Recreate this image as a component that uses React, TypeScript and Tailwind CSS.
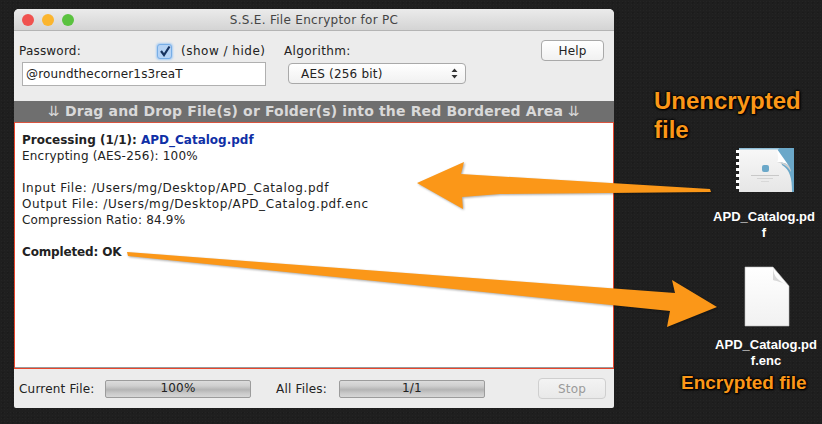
const ui = "font-['DejaVu_Sans','Liberation_Sans',sans-serif]";

function Meter({ label, w }: { label: string; w: string }) {
  return (
    <div className={`${w} h-[18px] rounded-[2px] border border-[#9c9c9c] bg-[linear-gradient(#dcdcdc,#cfcfcf_30%,#b4b4b4_55%,#c8c8c8_75%,#d6d6d6)] flex items-center justify-center text-[12px] leading-none text-[#222] pb-[2px]`}>
      {label}
    </div>
  );
}

function MacButton({ children, disabled, className = '' }: { children: string; disabled?: boolean; className?: string }) {
  return (
    <button
      className={`h-[21px] rounded-[4px] border text-[12px] leading-none ${disabled ? 'border-[#cfcfcf] text-[#9a9a9a] bg-[linear-gradient(#f3f3f3,#e9e9e9)]' : 'border-[#a9a9a9] text-[#222] bg-[linear-gradient(#ffffff,#f1f1f1)]'} ${className}`}
    >
      {children}
    </button>
  );
}

function Window() {
  return (
    <div className={`${ui} w-[600px] h-[399px] flex flex-col bg-[#ececec] rounded-t-[5px] rounded-b-[2px] overflow-hidden text-[12px] tracking-[0.2px] text-[#222]`}>
      {/* title bar */}
      <div className="relative h-[22px] shrink-0 flex items-center justify-center bg-[linear-gradient(#ebebeb,#d4d4d4)] border-b border-[#b4b4b4]">
        <div className="absolute left-[8px] top-[5px] flex gap-[8px]">
          <span className="w-[12px] h-[12px] rounded-full bg-[#f0524f]" />
          <span className="w-[12px] h-[12px] rounded-full bg-[#fbb52e]" />
          <span className="w-[12px] h-[12px] rounded-full bg-[#5ac23f]" />
        </div>
        <span className="text-[12px] text-[#444] tracking-[0.3px]">S.S.E. File Encryptor for PC</span>
      </div>

      {/* form */}
      <div className="h-[70px] shrink-0 flex pl-[5px] pr-[10px]">
        <div className="w-[248px] pt-[11px]">
          <div className="h-[18px] flex items-center">
            <span className="w-[138px]">Password:</span>
            <span className="w-[15px] h-[15px] rounded-[3px] bg-[#b5d3f5] border border-[#78aee6] shadow-[0_0_2px_1px_#a9cdf3] flex items-center justify-center">
              <svg width="12" height="12" viewBox="0 0 12 12">
                <path d="M2 6 L5 10 L10.5 1.5" fill="none" stroke="#17335f" strokeWidth="2.2" />
              </svg>
            </span>
            <span className="ml-[9px] whitespace-nowrap tracking-[0.5px]">(show / hide)</span>
          </div>
          <div className="mt-[2px] ml-[3px] w-[244px] h-[24px] bg-white border border-[#b0b0b0] flex items-center pl-[3px] text-[12px] tracking-[0.15px] text-[#222]">
            @roundthecorner1s3reaT
          </div>
        </div>
        <div className="ml-[17px] pt-[11px]">
          <div className="h-[18px] flex items-center tracking-[0.4px]">Algorithm:</div>
          <div className="mt-[3px] ml-[4px] w-[178px] h-[21px] rounded-[4px] border border-[#a9a9a9] bg-[linear-gradient(#ffffff,#f1f1f1)] flex items-center pl-[12px] pr-[7px]">
            <span className="flex-1">AES (256 bit)</span>
            <svg width="7" height="11" viewBox="0 0 7 11">
              <path d="M3.5 0.5 L6.5 4 H0.5 Z M3.5 10.5 L0.5 7 H6.5 Z" fill="#333" />
            </svg>
          </div>
        </div>
        <MacButton className="ml-auto mt-[9px] w-[63px]">Help</MacButton>
      </div>

      {/* drop hint */}
      <div className="h-[21px] shrink-0 bg-[#6f6f6f] flex items-center justify-center text-[14px] font-bold tracking-[0.15px] text-[#d9d9d9] whitespace-nowrap">
        <span className="font-normal">⇊</span>&nbsp;Drag and Drop File(s) or Folder(s) into the Red Bordered Area&nbsp;<span className="font-normal">⇊</span>
      </div>

      {/* log */}
      <div className="h-[247px] shrink-0 bg-white border border-[#e8452c] border-t-[#d9543f] shadow-[inset_0_-1px_0_#9a9a9a] pl-[7px] pt-[9px] text-[12px] leading-[16px] text-[#222]">
        <div className="font-bold tracking-normal">
          Processing (1/1): <span className="text-[#0f2fa6]">APD_Catalog.pdf</span>
        </div>
        <div>Encrypting (AES-256): 100%</div>
        <div className="mt-[16px] tracking-[0.57px]">Input File: /Users/mg/Desktop/APD_Catalog.pdf</div>
        <div className="tracking-[0.6px]">Output File: /Users/mg/Desktop/APD_Catalog.pdf.enc</div>
        <div>Compression Ratio: 84.9%</div>
        <div className="mt-[16px] font-bold tracking-[-0.15px]">Completed: OK</div>
      </div>

      {/* status */}
      <div className="flex-1 flex items-center pl-[5px] pr-[8px]">
        <span className="w-[86px]">Current File:</span>
        <Meter label="100%" w="w-[146px]" />
        <span className="ml-[25px] w-[63px]">All Files:</span>
        <Meter label="1/1" w="w-[146px]" />
        <MacButton disabled className="ml-auto w-[68px]">Stop</MacButton>
      </div>
    </div>
  );
}

function PdfThumb() {
  return (
    <svg className="absolute left-[736px] top-[148px]" width="58" height="44" viewBox="0 0 58 44">
      <defs>
        <linearGradient id="page" x1="0" y1="0" x2="0" y2="1">
          <stop offset="0" stopColor="#f8f8f8" />
          <stop offset="1" stopColor="#e6e6e6" />
        </linearGradient>
      </defs>
      <rect x="3" width="55" height="44" fill="url(#page)" />
      <path d="M41 0 H58 V44 H56 C56 30 54 22 46 17 Z" fill="#6ba8c9" />
      <rect x="3" width="40" height="1.5" fill="#8fbdd6" />
      <path d="M41 1 C42 8 43 12 41 14 C46 14 50 15 53 18 Z" fill="#ffffff" />
      <path d="M41 14 C46 14 50 15 53 18 C54 20 55 22 55 24 C52 18 47 16 41 14 Z" fill="#cfcfcf" />
      <g fill="#ffffff">
        {[2, 8, 14, 20, 26, 32, 38].map((y) => (
          <rect key={y} x="0" y={y} width="4" height="3" />
        ))}
      </g>
      <rect x="26" y="17" width="7" height="7" rx="2" fill="#6ba8c9" />
      <rect x="15" y="27" width="28" height="1" fill="#c8c8c8" />
      <rect x="21" y="30" width="16" height="1" fill="#d4d4d4" />
      <rect x="25" y="33" width="8" height="1" fill="#d8d8d8" />
    </svg>
  );
}

function BlankDoc() {
  return (
    <svg className="absolute left-[744px] top-[266px]" width="46" height="61" viewBox="0 0 46 61">
      <defs>
        <linearGradient id="doc" x1="0" y1="0" x2="0" y2="1">
          <stop offset="0" stopColor="#ffffff" />
          <stop offset="1" stopColor="#f1f1f1" />
        </linearGradient>
      </defs>
      <path d="M1 1 H29 L45 20 V60 H1 Z" fill="url(#doc)" stroke="#bcbcbc" strokeWidth="0.6" />
      <path d="M29 1 C30 10 31 13 45 20 C38 16 32 15 29 14 Z" fill="#d8d8d8" />
    </svg>
  );
}

function Arrows() {
  return (
    <svg className="absolute inset-0 pointer-events-none" width="822" height="424" viewBox="0 0 822 424">
      <polygon
        points="417,183 464,162 461,174 710,189 711,192 500,194 462,197 463,209"
        fill="#fb9718"
        style={{ filter: 'drop-shadow(1px 1px 1px rgba(0,0,0,0.35))' }}
      />
      <polygon
        points="127,252 675,293 672,280 717,307 667,327 670,311 128,256"
        fill="#fb9718"
        style={{ filter: 'drop-shadow(1px 1px 1px rgba(0,0,0,0.35))' }}
      />
    </svg>
  );
}

const callout = "absolute font-['Liberation_Sans',Arial,sans-serif] font-bold text-[#fb9718] whitespace-nowrap [text-shadow:0_0_2px_#000,0_0_2px_#000,0_0_3px_#000,1px_1px_2px_#000]";
const fileLabel = "absolute w-[120px] text-center font-['Liberation_Sans',Arial,sans-serif] font-bold text-[13px] leading-[16px] text-white";

export default function App() {
  return (
    <div className="relative w-[822px] h-[424px] overflow-hidden bg-[#1f1f1f] bg-[radial-gradient(#242424_1px,transparent_1px),radial-gradient(#1b1b1b_1px,transparent_1px)] bg-[length:3px_3px,5px_5px] pl-[14px] pt-[9px]">
      <Window />
      <Arrows />
      <div className={`${callout} left-[654px] top-[86px] text-[24px] leading-[29px]`}>
        Unencrypted
        <br />
        file
      </div>
      <PdfThumb />
      <div className={`${fileLabel} left-[704px] top-[209px]`}>
        APD_Catalog.pd
        <br />
        f
      </div>
      <BlankDoc />
      <div className={`${fileLabel} left-[706px] top-[337px]`}>
        APD_Catalog.pd
        <br />
        f.enc
      </div>
      <div className={`${callout} left-[681px] top-[372px] text-[19px] leading-[22px]`}>Encrypted file</div>
    </div>
  );
}
